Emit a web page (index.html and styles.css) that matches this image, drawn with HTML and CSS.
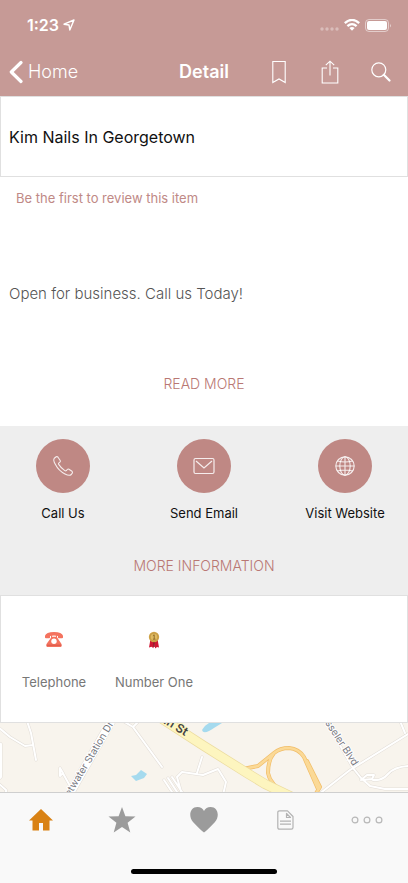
FILE: index.html
```html
<!DOCTYPE html>
<html lang="en">
<head>
<meta charset="utf-8">
<meta name="viewport" content="width=device-width, initial-scale=1">
<title>Detail</title>
<link rel="stylesheet" href="styles.css">
</head>
<body>
<header class="top">
  <div class="status">
    <div class="status-time">
      <span>1:23</span>
      <svg width="12" height="12" viewBox="0 0 12 12" fill="none" stroke="#fff" stroke-width="1.4" stroke-linejoin="round"><path d="M11 1 6.8 11 6 6 1 5.2Z"/></svg>
    </div>
    <div class="status-icons">
      <svg width="19" height="12" viewBox="0 0 19 12" fill="#fff" fill-opacity=".35"><circle cx="2" cy="10" r="1.7"/><circle cx="7" cy="10" r="1.7"/><circle cx="12" cy="10" r="1.7"/><circle cx="17" cy="10" r="1.7"/></svg>
      <svg width="16" height="12" viewBox="0 0 16 12" fill="none" stroke="#fff" stroke-width="2.3"><path d="M.8 4.2Q8-2.4 15.2 4.2"/><path d="M3.4 7.2Q8 3 12.6 7.2"/><path d="M5.4 9.1Q8 7 10.6 9.1L8 11.8Z" fill="#fff" stroke="none"/></svg>
      <svg width="27" height="13" viewBox="0 0 27 13"><rect x=".5" y=".5" width="23" height="12" rx="3.5" fill="none" stroke="#fff" stroke-opacity=".5"/><rect x="2" y="2" width="20" height="9" rx="2" fill="#fff"/><path d="M25 4.5q1.600 2 0 4Z" fill="#fff" fill-opacity=".6"/></svg>
    </div>
  </div>
  <nav class="navbar">
    <a class="back" href="#home">
      <svg width="14" height="24" viewBox="0 0 14 24" fill="none" stroke="#fff" stroke-width="3.2" stroke-linecap="round" stroke-linejoin="round"><path d="M12 2.500 2.300 12 12 21.500"/></svg>
      <span>Home</span>
    </a>
    <h1 class="nav-title">Detail</h1>
    <div class="nav-actions">
      <button type="button" aria-label="Bookmark"><svg width="14" height="24" viewBox="0 0 14 24" fill="none" stroke="#fff" stroke-width="1.100"><path d="M.8 1.500H13.200V22.500L7 19 .8 22.500Z"/></svg></button>
      <button type="button" aria-label="Share"><svg width="18" height="24" viewBox="0 0 18 24" fill="none" stroke="#fff" stroke-width="1.100"><path d="M6 8H1.200V23H16.800V8H12M9 15.500V1.200M4.800 5.200 9 1.200 13.200 5.200"/></svg></button>
      <button type="button" aria-label="Search"><svg width="20" height="20" viewBox="0 0 20 20" fill="none" stroke="#fff"><circle cx="7.800" cy="7.800" r="7" stroke-width="1.200"/><path d="M12.800 12.800 18.500 18.500" stroke-width="2.200" stroke-linecap="round"/></svg></button>
    </div>
  </nav>
</header>

<main>
  <section class="card title-card"><h2>Kim Nails In Georgetown</h2></section>
  <a class="review" href="#review">Be the first to review this item</a>
  <p class="description">Open for business. Call us Today!</p>
  <button class="read-more" type="button">READ MORE</button>

  <section class="contact">
    <div class="contact-row">
      <a class="contact-item" href="#call">
        <span class="disc"><svg width="22" height="22" viewBox="0 0 22 22" fill="none" stroke="#fff" stroke-opacity=".85" stroke-width="1.100" stroke-linejoin="round"><path d="M4.200 1.800 2.300 3.300C1.400 4.200 1.700 6.300 3.300 9.300 5.500 13.600 9 17 13 19 16 20.500 18.300 20.500 19.300 19.500L20.400 17.900Q20.800 17 20 16.300L16.900 14.200Q16 13.700 15.300 14.500L14.300 15.700Q13.700 16.200 12.800 15.600 9.100 13.200 6.700 9.400 6.100 8.500 6.900 7.900L8.100 6.900Q8.700 6.300 8.200 5.500L6 2.200Q5.200 1.200 4.200 1.800Z"/></svg></span>
        <span>Call Us</span>
      </a>
      <a class="contact-item" href="#email">
        <span class="disc"><svg width="22" height="18" viewBox="0 0 22 18" fill="none" stroke="#fff" stroke-opacity=".85" stroke-width="1.200"><rect x="1" y="1.500" width="20" height="15" rx="1.500"/><path d="M3 4 11 11 19 4"/></svg></span>
        <span>Send Email</span>
      </a>
      <a class="contact-item" href="#website">
        <span class="disc"><svg width="20" height="20" viewBox="0 0 20 20" fill="none" stroke="#fff" stroke-opacity=".85" stroke-width="1.100"><circle cx="10" cy="10" r="9.200"/><ellipse cx="10" cy="10" rx="5.200" ry="9.200"/><path d="M10 .8V19.200M.8 10H19.200M2.500 5Q10 7 17.500 5M2.500 15Q10 13 17.500 15"/></svg></span>
        <span>Visit Website</span>
      </a>
    </div>
    <h3 class="more-heading">MORE INFORMATION</h3>
  </section>

  <section class="card info-card">
    <a class="info-item" href="#telephone">
      <svg width="18" height="18" viewBox="0 0 18 18"><path d="M0 6.500V4.800Q1 1 9 1T18 4.800V6.500Q18 7.200 17 7.200H13.700Q13 7.200 13 6.500V4.900Q9 4 5 4.900V6.500Q5 7.200 4.300 7.200H1Q0 7.200 0 6.500Z" fill="#f4735f"/><path d="M6 4.200H7V5.700H11V4.200H12V6.200L16.500 13V15.200Q16.500 16 15.700 16H2.300Q1.500 16 1.500 15.200V13L6 6.800Z" fill="#f4735f"/><circle cx="9" cy="10.300" r="2.700" fill="#fff"/><path d="M1.500 14.200H16.500" stroke="#d95748"/></svg>
      <span>Telephone</span>
    </a>
    <a class="info-item" href="#number-one">
      <svg width="12" height="18" viewBox="0 0 12 18"><path d="M2.500 8 1 16.500 3.500 15.800 5.500 17.300 6 11 7.200 17.500 9 16 11 16.600 9.500 8Z" fill="#cf1732"/><path d="M6 10V16" stroke="#8e0d20" stroke-width="1.500"/><circle cx="6" cy="6" r="5.200" fill="#d0a54a"/><circle cx="6" cy="6" r="3.900" fill="#dfbb62" stroke="#b98b35" stroke-width=".6"/><path d="M4.900 4.700 6.200 3.800V8M4.900 8.200H7.500" fill="none" stroke="#8a6526" stroke-width=".9"/></svg>
      <span>Number One</span>
    </a>
  </section>

  <svg class="map" viewBox="0 0 408 69" preserveAspectRatio="xMidYMid slice" role="img" aria-label="Map">
    <rect width="408" height="70" fill="#f8f4ed"/>
    <path d="M202 7Q205 2 209 0H222Q214 5 209 8 203 11 202 7Z" fill="#a5daee"/>
    <path d="M131 53 136 52 141 47 147 51 144 55 136 58Z" fill="#a5daee"/>
    <g fill="none" stroke-linejoin="round" stroke-linecap="round">
      <g stroke="#e2ddd7" stroke-width="3">
        <path d="M-2 4 10 14 25 23 33 22M27-2 31 10 36 37M-2 20 1 21V54L-2 57M-2 60 6 67V72M75 72 60 45V53L63 50 60 45M123-2 133 4 162 44M133 4 139-2M164 57 174 72M168 55 179 72M172 54 184 72M182 72 177 54 182 49 203 52 218 46 226 59 223 72M197 50 202 34"/>
        <path d="M69 72 112-3" stroke-width="9"/>
        <path d="M318 72 350 47 408 11M326-2 353 45 361 55 370 63 385 66H408M361 57 367 52 374 52 372 56 363 57M373 57Q382 58 388 51T408 43M400-2 405 10"/>
      </g>
      <g stroke="#fff" stroke-width="2">
        <path d="M-2 4 10 14 25 23 33 22M27-2 31 10 36 37M-2 20 1 21V54L-2 57M-2 60 6 67V72M75 72 60 45V53L63 50 60 45M123-2 133 4 162 44M133 4 139-2M164 57 174 72M168 55 179 72M172 54 184 72M182 72 177 54 182 49 203 52 218 46 226 59 223 72M197 50 202 34"/>
        <path d="M69 72 112-3" stroke-width="8"/>
        <path d="M318 72 350 47 408 11M326-2 353 45 361 55 370 63 385 66H408M361 57 367 52 374 52 372 56 363 57M373 57Q382 58 388 51T408 43M400-2 405 10"/>
      </g>
      <path d="M243 46 258 43 274 30Q280 25 289 25 299 26 304 34L311 50 318 66M274 30Q268 37 268 50 270 62 288 72M307 38 320 64 315 72" stroke="#f1bd68" stroke-width="4"/>
      <path d="M243 46 258 43 274 30Q280 25 289 25 299 26 304 34L311 50 318 66M274 30Q268 37 268 50 270 62 288 72M307 38 320 64 315 72" stroke="#fbd996" stroke-width="2.600"/>
      <path d="M150-12 204 23 247 50 265 61 292 74" stroke="#ecdca0" stroke-width="10"/>
      <path d="M150-12 204 23 247 50 265 61 292 74" stroke="#fdf5bf" stroke-width="8.600"/>
    </g>
    <g class="map-label">
      <text transform="translate(70 74) rotate(-59)">etwater Station Dr</text>
      <text transform="translate(325 0) rotate(57)">sseler Blvd</text>
      <text class="map-label-main" transform="translate(163 0) rotate(31)">in St</text>
    </g>
  </svg>
</main>

<footer class="tabbar">
  <nav class="tabs">
    <a href="#home" aria-label="Home"><svg width="24" height="22" viewBox="0 0 24 22"><path d="M12 0 24 11.500H20.500V21.500H14V14H10V21.500H3.500V11.500H0Z" fill="#d98215"/></svg></a>
    <a href="#featured" aria-label="Featured"><svg width="28" height="26" viewBox="0 0 28 26"><path d="M14 0 17.400 9.200 27.500 9.600 19.600 15.700 22.300 25.500 14 20 5.700 25.500 8.400 15.700.5 9.600 10.600 9.200Z" fill="#9b9b9b"/></svg></a>
    <a href="#favourites" aria-label="Favourites"><svg width="28" height="26" viewBox="0 0 28 26"><path d="M14 25.500Q12 24.500 3 15C-2 9 0 0 7.500 0Q12 0 14 4 16 0 20.500 0C28 0 30 9 25 15Q16 24.500 14 25.500Z" fill="#9b9b9b"/></svg></a>
    <a href="#notes" aria-label="Notes"><svg width="17" height="20" viewBox="0 0 17 20" fill="none" stroke="#b3b3b3" stroke-width="1.200" stroke-linejoin="round"><path d="M2.500.8H10.500L16 6.500V17.500Q16 19.200 14.300 19.200H2.500Q.8 19.200.8 17.500V2.500Q.8.8 2.500.8ZM9.500 3.500V7.500H13.500ZM3 11.200H14M3 14.200H14"/></svg></a>
    <a href="#more" aria-label="More"><svg width="32" height="8" viewBox="0 0 32 8" fill="none" stroke="#b8b8b8" stroke-width="1.200"><circle cx="4" cy="4" r="2.900"/><circle cx="16" cy="4" r="2.900"/><circle cx="28" cy="4" r="2.900"/></svg></a>
  </nav>
  <div class="home-indicator"></div>
</footer>
</body>
</html>
```

FILE: styles.css
```css
* { box-sizing: border-box; }

body {
  margin: 0;
  min-height: 100vh;
  display: flex;
  flex-direction: column;
  background: #fff;
  color: #111;
  font-family: Inter, "Liberation Sans", sans-serif;
  font-size: 13px;
  line-height: 20px;
}

h1, h2, h3, p { margin: 0; }
a { color: inherit; text-decoration: none; }
button { padding: 0; border: 0; background: none; font: inherit; color: inherit; }
svg { display: block; flex: none; }

main { flex: 1; display: flex; flex-direction: column; }

.top { background: #c69a96; color: #fff; }

.status {
  height: 48px;
  padding: 2px 16px 0 27px;
  display: flex;
  align-items: center;
  justify-content: space-between;
}
.status-time { display: flex; align-items: center; gap: 4px; font-size: 16px; font-weight: 600; }
.status-icons { display: flex; align-items: center; gap: 5px; }

.navbar {
  height: 48px;
  display: grid;
  grid-template-columns: 1fr auto 1fr;
  align-items: center;
}
.back { padding-left: 9px; display: flex; align-items: center; gap: 5px; font-size: 18px; font-weight: 300; }
.nav-title { font-size: 18px; font-weight: 600; }
.nav-actions { padding-right: 2px; display: flex; justify-content: flex-end; }
.nav-actions button { width: 51px; height: 40px; display: grid; place-items: center; flex: none; }

.card { background: #fff; border: 1px solid #e0e0e0; }

.title-card { height: 81px; padding: 0 8px; display: flex; align-items: center; }
.title-card h2 { font-size: 16px; font-weight: 400; }

.review { padding: 11px 16px; color: #c08986; }
.description { padding: 65px 9px 70px; font-size: 15px; font-weight: 300; color: #555; }

.read-more { margin-bottom: 32px; align-self: center; font-size: 14px; font-weight: 300; color: #b97773; }

.contact { background: #eee; padding: 13px 15px 19px; }
.contact-row { display: flex; justify-content: space-between; }
.contact-item { width: 96px; display: flex; flex-direction: column; align-items: center; gap: 10px; }
.disc {
  width: 54px;
  height: 54px;
  border-radius: 50%;
  background: #bf8884;
  display: grid;
  place-items: center;
}
.more-heading { margin-top: 33px; text-align: center; font-size: 14px; font-weight: 300; color: #b97773; }

.info-card { height: 128px; padding: 35px 3px 0; display: flex; }
.info-item { width: 100px; display: flex; flex-direction: column; align-items: center; gap: 23px; color: #777; }

.map { width: 100%; flex: 1 0 69px; min-height: 0; height: 69px; }
.map-label { font-size: 10px; fill: #77787f; stroke: #fff; stroke-width: 2px; paint-order: stroke; }
.map-label-main { font-size: 12px; font-weight: 600; fill: #444; stroke: #fdf5bf; }

.tabbar { background: #f9f9f9; border-top: 1px solid #cfcfcf; padding-bottom: 9px; }
.tabs { display: grid; grid-template-columns: repeat(5, 1fr); }
.tabs a { height: 54px; display: grid; place-items: center; }
.home-indicator { width: 36%; height: 5px; margin: 22px auto 0; border-radius: 3px; background: #000; }
```
